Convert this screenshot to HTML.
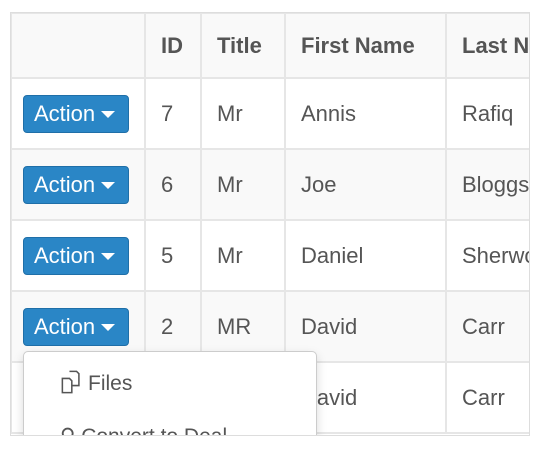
<!DOCTYPE html>
<html><head><style>
body{margin:0;background:#fff;font-family:"Liberation Sans",sans-serif;}
.wrap{position:absolute;left:10px;top:12px;width:518px;height:422px;border:1px solid #ddd;overflow:hidden;}
table{border-collapse:collapse;position:absolute;left:-1px;top:-1px;table-layout:fixed;width:640px}
td,th{border:2px solid #e6e6e6;color:#555;font-size:22px;text-align:left;padding:0 0 0 15px;height:71px;white-space:nowrap;overflow:hidden;box-sizing:border-box}
th{font-weight:bold;background:#f9f9f9;height:65px;}
tr.s td{background:#f9f9f9}
td.a{padding-left:11px}
.btn{display:inline-block;box-sizing:border-box;width:106px;height:38px;background:#2a86c6;color:#fff;border:1px solid #1f6fa8;border-radius:4px;padding:0 0 0 10px;font-size:22px;line-height:36px}
.caret{display:inline-block;width:0;height:0;border-left:7px solid transparent;border-right:7px solid transparent;border-top:7px solid #fff;vertical-align:middle;margin-left:6px}
.dd{position:absolute;left:12px;top:338px;width:292px;height:110px;background:#fff;border:1px solid #ccc;border-radius:5px;box-shadow:0 4px 10px rgba(0,0,0,.15);font-size:21px;color:#555}
.dd div{position:absolute;left:36px}
</style></head><body>
<div class="wrap">
<table>
<colgroup><col style="width:134px"><col style="width:56px"><col style="width:84px"><col style="width:161px"><col style="width:205px"></colgroup>
<tr><th></th><th>ID</th><th>Title</th><th>First Name</th><th>Last Name</th></tr>
<tr><td class="a"><span class="btn">Action<span class="caret"></span></span></td><td>7</td><td>Mr</td><td>Annis</td><td>Rafiq</td></tr>
<tr class="s"><td class="a"><span class="btn">Action<span class="caret"></span></span></td><td>6</td><td>Mr</td><td>Joe</td><td>Bloggs</td></tr>
<tr><td class="a"><span class="btn">Action<span class="caret"></span></span></td><td>5</td><td>Mr</td><td>Daniel</td><td>Sherwood</td></tr>
<tr class="s"><td class="a"><span class="btn">Action<span class="caret"></span></span></td><td>2</td><td>MR</td><td>David</td><td>Carr</td></tr>
<tr><td></td><td></td><td></td><td>David</td><td>Carr</td></tr>
</table>
<div class="dd">
<div style="top:17px"><svg width="26" height="26" viewBox="0 0 22 22" style="vertical-align:-5px;margin-right:2px" fill="none" stroke="#555" stroke-width="1.3"><path d="M2 8h6l2 2v10H2z"/><path d="M8 2h6l2 2v10h-6"/></svg>Files</div>
<div style="top:72px">⚲ Convert to Deal</div>
</div>
</div>
</body></html>
